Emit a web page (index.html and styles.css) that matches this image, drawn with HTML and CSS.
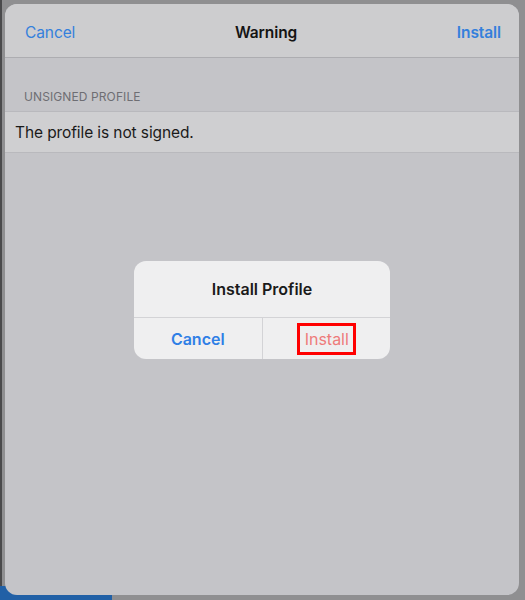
FILE: index.html
```html
<!DOCTYPE html>
<html>
<head>
<meta charset="utf-8">
<link rel="stylesheet" href="styles.css">
</head>
<body>
<div class="screen">
  <div class="edge"></div>
  <div class="tabbar"></div>
  <div class="sheet">
    <div class="navbar">
      <span class="nav-btn">Cancel</span>
      <span class="nav-title">Warning</span>
      <span class="nav-btn bold">Install</span>
    </div>
    <div class="content">
      <div class="section-header">UNSIGNED PROFILE</div>
      <div class="row">The profile is not signed.</div>
    </div>
    <div class="overlay">
      <div class="alert">
        <div class="alert-title">Install Profile</div>
        <div class="alert-actions">
          <div class="alert-btn cancel">Cancel</div>
          <div class="alert-btn install"><span class="highlight">Install</span></div>
        </div>
      </div>
    </div>
  </div>
</div>
</body>
</html>
```

FILE: styles.css
```css
html, body {
  margin: 0;
  padding: 0;
}
body {
  width: 525px;
  height: 600px;
  background: #8f8f91;
  font-family: "Inter", "Liberation Sans", sans-serif;
  overflow: hidden;
}
.screen {
  position: relative;
  width: 525px;
  height: 600px;
  padding: 4px 6px 5px 5px;
  box-sizing: border-box;
}
.edge {
  position: absolute;
  left: 0;
  top: 0;
  width: 2px;
  height: 600px;
  background: #4a4a4c;
}
.tabbar {
  position: absolute;
  left: 0;
  bottom: 0;
  width: 112px;
  height: 14px;
  background: #2160a6;
}
.sheet {
  position: relative;
  height: 100%;
  background: #c4c4c8;
  border-radius: 12px;
  overflow: hidden;
  display: flex;
  flex-direction: column;
}
.navbar {
  height: 54px;
  background: #cdcdcf;
  border-bottom: 1px solid #adadb1;
  display: flex;
  align-items: center;
  justify-content: space-between;
  padding: 3px 18px 0 20px;
  box-sizing: border-box;
  flex-shrink: 0;
}
.nav-btn {
  color: #3480dc;
  font-size: 15.5px;
  letter-spacing: -0.1px;
}
.nav-btn.bold {
  font-weight: 600;
}
.nav-title {
  color: #141414;
  font-size: 15.5px;
  font-weight: 600;
  letter-spacing: -0.1px;
}
.content {
  padding-top: 31px;
}
.section-header {
  color: #6e6e73;
  font-size: 12px;
  padding: 0 0 7px 19px;
  letter-spacing: 0.1px;
}
.row {
  height: 40px;
  background: #cfcfd1;
  border-top: 1px solid #b9b9bd;
  border-bottom: 1px solid #b9b9bd;
  display: flex;
  align-items: center;
  padding-left: 10px;
  color: #1a1a1a;
  font-size: 15.5px;
  letter-spacing: -0.1px;
}
.overlay {
  position: absolute;
  left: 129px;
  top: 257px;
}
.alert {
  width: 256px;
  height: 98px;
  background: #efeff0;
  border-radius: 12px;
  display: flex;
  flex-direction: column;
  overflow: hidden;
}
.alert-title {
  height: 57px;
  display: flex;
  align-items: center;
  justify-content: center;
  font-size: 16px;
  font-weight: 600;
  color: #1a1a1a;
  border-bottom: 1px solid #d3d3d6;
  box-sizing: border-box;
}
.alert-actions {
  flex: 1;
  display: flex;
}
.alert-btn {
  flex: 1;
  display: flex;
  align-items: center;
  justify-content: center;
  font-size: 16px;
}
.alert-btn.cancel {
  color: #2f7fe6;
  font-weight: 600;
  border-right: 1px solid #d3d3d6;
}
.alert-btn.install {
  color: #ee7b7b;
}
.highlight {
  border: 3px solid #ff0000;
  padding: 3px 4px 3px 5px;
  line-height: 20px;
}
```
